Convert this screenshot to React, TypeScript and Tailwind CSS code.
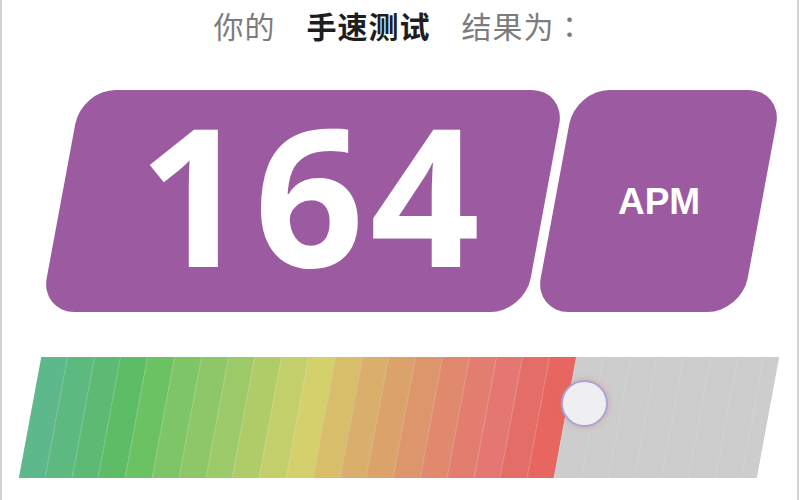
import React from "react";

// Colour bands of the speed gauge, slowest (green) to fastest (red).
const bands = [
  "bg-[#5db88c]",
  "bg-[#5cb980]",
  "bg-[#5cba74]",
  "bg-[#5dbc66]",
  "bg-[#6bc262]",
  "bg-[#7dc566]",
  "bg-[#8dc768]",
  "bg-[#9cca69]",
  "bg-[#afcc69]",
  "bg-[#c3cf6b]",
  "bg-[#d4d06b]",
  "bg-[#d8bd6b]",
  "bg-[#d9af6b]",
  "bg-[#dba36a]",
  "bg-[#dd966b]",
  "bg-[#e0896c]",
  "bg-[#e37d70]",
  "bg-[#e47771]",
  "bg-[#e56d68]",
  "bg-[#e76660]",
];

const restBands = 8;

export default function App() {
  return (
    <div className="w-[799px] h-[500px] bg-white border-l-2 border-r-2 border-[#d2d2d2] overflow-hidden flex flex-col">
      {/* heading */}
      <div
        className="pt-[10px] flex justify-center gap-[31px] text-[30px] leading-[30px] tracking-[1px]"
        style={{ fontFamily: '"Noto Sans CJK SC", "Noto Sans", sans-serif' }}
      >
        <span className="text-[#7c7c7c]">你的</span>
        <span className="text-[#1e1e1e] font-bold">手速测试</span>
        <span className="text-[#7c7c7c]">
          结果为
          <span style={{ fontFamily: '"Noto Sans CJK TC", "Noto Sans CJK SC", sans-serif' }}>：</span>
        </span>
      </div>

      {/* score cards */}
      <div className="mt-[50px] flex gap-[10px] pl-[59px]">
        <div className="w-[484px] h-[222px] rounded-[34px] bg-[#9c5ba0] -skew-x-[10.5deg] flex items-center justify-center">
          <span
            className="skew-x-[10.5deg] text-white font-bold text-[192px] leading-none tracking-[6px] pl-[15px] mb-[17px]"
            style={{ fontFamily: '"Open Sans", "Noto Sans", sans-serif' }}
          >
            164
          </span>
        </div>
        <div className="w-[207px] h-[222px] rounded-[34px] bg-[#9c5ba0] -skew-x-[10.5deg] flex items-center justify-center">
          <span
            className="skew-x-[10.5deg] text-white font-bold text-[37px] leading-none pl-[2px]"
            style={{ fontFamily: '"Liberation Sans", Arial, sans-serif' }}
          >
            APM
          </span>
        </div>
      </div>

      {/* gauge */}
      <div className="mt-[45px] ml-[28px] relative w-[738px] h-[121px]">
        <div className="absolute inset-0 -skew-x-[10.5deg] overflow-hidden flex bg-[#cdcdcd]">
          <div className="w-[535px] h-full flex shrink-0">
            {bands.map((c, i) => (
              <div
                key={i}
                className={`flex-1 h-full ${c} ${i > 0 ? "border-l border-white/15" : ""}`}
              />
            ))}
          </div>
          <div className="flex-1 h-full flex">
            {Array.from({ length: restBands }).map((_, i) => (
              <div key={i} className="w-[26.75px] shrink-0 h-full border-l border-[#d3d3d3]" />
            ))}
          </div>
        </div>
        {/* slider knob */}
        <div className="absolute left-[531px] top-[23px] w-[47px] h-[47px] rounded-full bg-[#efeff1] border-2 border-[#a6a5d8] shadow-[0_0_6px_rgba(225,110,110,0.45)]" />
      </div>
    </div>
  );
}
